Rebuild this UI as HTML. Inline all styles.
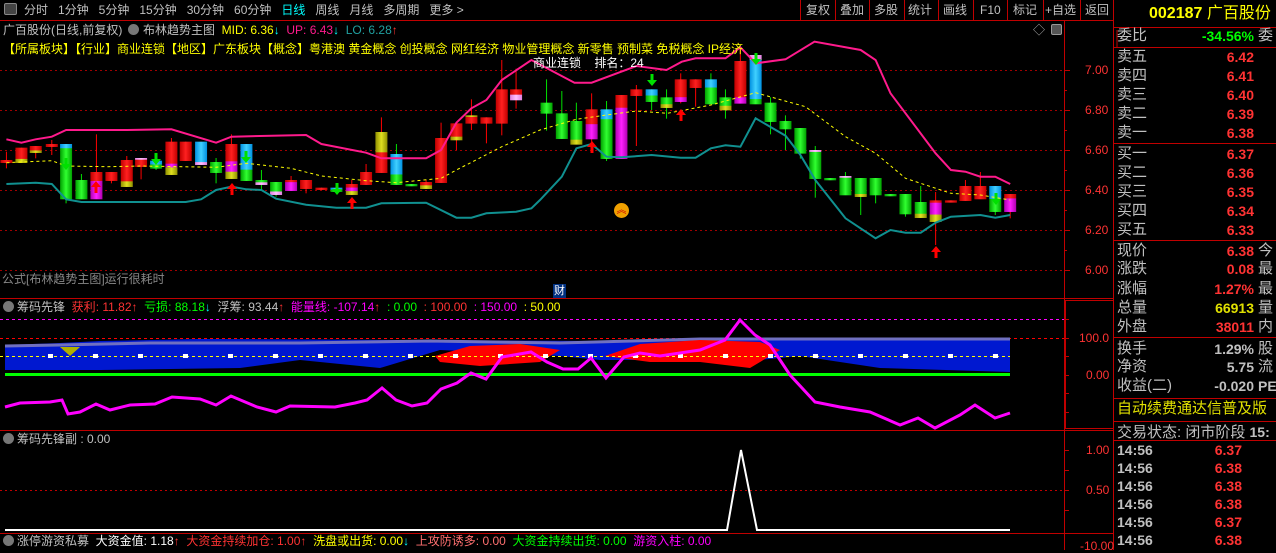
<!DOCTYPE html>
<html><head><meta charset="utf-8"><style>
body{margin:0;background:#000;width:1276px;height:550px;overflow:hidden;position:relative;font-family:"Liberation Sans","Noto Sans CJK SC",sans-serif;font-size:12px;color:#c0c0c0}
.t{position:absolute;white-space:pre;line-height:14px}
.r{color:#ff3333}.g{color:#00ff00}.y{color:#ffff00}.m{color:#ff00ff}.c{color:#00ffff}.w{color:#fff}
.lbl{position:absolute;left:1117px;font-size:15px;color:#c0c0c0;line-height:18px;white-space:pre}
.val{position:absolute;right:22px;font-size:14px;font-weight:bold;color:#ff3333;line-height:18px;text-align:right}
.x3{position:absolute;left:1258px;font-size:15px;color:#c0c0c0;line-height:18px}
svg{position:absolute;left:0;top:0}
</style></head><body>
<svg id="s" width="1276" height="550"></svg>

<!-- top menu -->
<div class="t" style="left:4px;top:3px;width:13px;height:12px;border:1px solid #888;border-radius:2px;box-sizing:border-box;background:#444"></div>
<div class="t" style="top:3px;left:24px;font-size:12px">分时   1分钟   5分钟   15分钟   30分钟   60分钟   <span class="c">日线</span>   周线   月线   多周期   更多 &gt;</div>
<div class="t" style="top:3px;left:806px">复权</div>
<div class="t" style="top:3px;left:840px">叠加</div>
<div class="t" style="top:3px;left:874px">多股</div>
<div class="t" style="top:3px;left:908px">统计</div>
<div class="t" style="top:3px;left:943px">画线</div>
<div class="t" style="top:3px;left:980px">F10</div>
<div class="t" style="top:3px;left:1013px">标记</div>
<div class="t" style="top:3px;left:1045px">+自选</div>
<div class="t" style="top:3px;left:1085px">返回</div>

<!-- line 2 -->
<div class="t" style="top:23px;left:3px">广百股份(日线,前复权)</div>
<div class="t" style="top:24px;left:128px;width:11px;height:11px;border-radius:6px;background:#777"></div>
<div class="t" style="top:23px;left:143px">布林趋势主图  <span class="y">MID: 6.36</span><span class="c">↓</span>  <span style="color:#ff1a8c">UP: 6.43</span><span class="c">↓</span>  <span style="color:#20a0a0">LO: 6.28</span><span class="r">↑</span></div>
<div class="t" style="top:23px;left:1033px;color:#aaa">◇</div>
<div class="t" style="top:24px;left:1051px;width:11px;height:11px;border:1px solid #999;border-radius:2px;box-sizing:border-box;background:#555"></div>
<div class="t y" style="top:42px;left:3px">【所属板块】【行业】商业连锁【地区】广东板块【概念】粤港澳 黄金概念 创投概念 网红经济 物业管理概念 新零售 预制菜 免税概念 IP经济</div>
<div class="t w" style="top:56px;left:533px">商业连锁    排名：24</div>
<div class="t" style="top:272px;left:2px;color:#888">公式[布林趋势主图]运行很耗时</div>
<div class="t w" style="top:284px;left:553px;background:#003080;font-size:11px;padding:0 1px">财</div>
<div class="t" style="top:203px;left:614px;width:15px;height:15px;border-radius:8px;background:#f0a000;color:#c00;font-size:10px;text-align:center;line-height:15px">︽</div>

<!-- axis labels main -->
<div class="t r" style="top:63px;left:1085px">7.00</div>
<div class="t r" style="top:103px;left:1085px">6.80</div>
<div class="t r" style="top:143px;left:1085px">6.60</div>
<div class="t r" style="top:183px;left:1085px">6.40</div>
<div class="t r" style="top:223px;left:1085px">6.20</div>
<div class="t r" style="top:263px;left:1085px">6.00</div>

<!-- indicator header -->
<div class="t" style="top:301px;left:3px;width:11px;height:11px;border-radius:6px;background:#777"></div>
<div class="t" style="top:300px;left:17px">筹码先锋  <span class="r">获利</span><span class="r">: 11.82↑</span>  <span class="g">亏损: 88.18</span><span class="c">↓</span>  浮筹: 93.44<span class="r">↑</span>  <span class="m">能量线: -107.14</span><span class="r">↑</span>  <span class="g">: 0.00</span>  <span class="r">: 100.00</span>  <span class="m">: 150.00</span>  <span class="y">: 50.00</span></div>
<div class="t r" style="top:331px;left:1079px">100.0</div>
<div class="t r" style="top:368px;left:1086px">0.00</div>

<div class="t" style="top:433px;left:3px;width:11px;height:11px;border-radius:6px;background:#777"></div>
<div class="t" style="top:432px;left:17px">筹码先锋副 : 0.00</div>
<div class="t r" style="top:443px;left:1086px">1.00</div>
<div class="t r" style="top:483px;left:1086px">0.50</div>
<div class="t r" style="top:539px;left:1080px">-10.00</div>

<div class="t" style="top:535px;left:3px;width:11px;height:11px;border-radius:6px;background:#777"></div>
<div class="t" style="top:534px;left:17px">涨停游资私募  <span class="w">大资金值: 1.18</span><span class="r">↑</span>  <span class="r">大资金持续加仓: 1.00↑</span>  <span class="y">洗盘或出货: 0.00</span><span class="c">↓</span>  <span style="color:#ff7070">上攻防诱多: 0.00</span>  <span class="g">大资金持续出货: 0.00</span>  <span class="m">游资入柱: 0.00</span></div>

<!-- right panel -->
<div class="t" style="top:4px;left:1149px;font-size:16px;font-weight:bold;color:#ffff00;line-height:20px">002187 <span style="font-weight:normal">广百股份</span></div>
<div class="lbl" style="top:27px">委比</div><div class="val" style="top:27px;color:#00ff00">-34.56%</div><div class="x3" style="top:27px">委</div>
<div class="lbl" style="top:48px">卖五</div><div class="val" style="top:48px">6.42</div>
<div class="lbl" style="top:67px">卖四</div><div class="val" style="top:67px">6.41</div>
<div class="lbl" style="top:86px">卖三</div><div class="val" style="top:86px">6.40</div>
<div class="lbl" style="top:105px">卖二</div><div class="val" style="top:105px">6.39</div>
<div class="lbl" style="top:124px">卖一</div><div class="val" style="top:124px">6.38</div>
<div class="lbl" style="top:145px">买一</div><div class="val" style="top:145px">6.37</div>
<div class="lbl" style="top:164px">买二</div><div class="val" style="top:164px">6.36</div>
<div class="lbl" style="top:183px">买三</div><div class="val" style="top:183px">6.35</div>
<div class="lbl" style="top:202px">买四</div><div class="val" style="top:202px">6.34</div>
<div class="lbl" style="top:221px">买五</div><div class="val" style="top:221px">6.33</div>
<div class="lbl" style="top:242px">现价</div><div class="val" style="top:242px">6.38</div><div class="x3" style="top:242px">今</div>
<div class="lbl" style="top:260px">涨跌</div><div class="val" style="top:260px">0.08</div><div class="x3" style="top:260px">最</div>
<div class="lbl" style="top:280px">涨幅</div><div class="val" style="top:280px">1.27%</div><div class="x3" style="top:280px">最</div>
<div class="lbl" style="top:299px">总量</div><div class="val" style="top:299px;color:#e0e000">66913</div><div class="x3" style="top:299px">量</div>
<div class="lbl" style="top:318px">外盘</div><div class="val" style="top:318px">38011</div><div class="x3" style="top:318px">内</div>
<div class="lbl" style="top:340px">换手</div><div class="val" style="top:340px;color:#c0c0c0">1.29%</div><div class="x3" style="top:340px">股</div>
<div class="lbl" style="top:358px">净资</div><div class="val" style="top:358px;color:#c0c0c0">5.75</div><div class="x3" style="top:358px">流</div>
<div class="lbl" style="top:377px">收益(二)</div><div class="val" style="top:377px;color:#c0c0c0">-0.020</div><div class="x3" style="top:377px;font-weight:bold;font-size:14px">PE</div>
<div class="lbl" style="top:400px;color:#e0e000;font-size:15px">自动续费通达信普及版</div>
<div class="lbl" style="top:423px">交易状态: 闭市阶段 <b style="font-size:14px">15:</b></div>
<div class="lbl" style="top:441px;font-weight:bold;font-size:14px">14:56</div><div class="val" style="top:441px;right:34px">6.37</div>
<div class="lbl" style="top:459px;font-weight:bold;font-size:14px">14:56</div><div class="val" style="top:459px;right:34px">6.38</div>
<div class="lbl" style="top:477px;font-weight:bold;font-size:14px">14:56</div><div class="val" style="top:477px;right:34px">6.38</div>
<div class="lbl" style="top:495px;font-weight:bold;font-size:14px">14:56</div><div class="val" style="top:495px;right:34px">6.38</div>
<div class="lbl" style="top:513px;font-weight:bold;font-size:14px">14:56</div><div class="val" style="top:513px;right:34px">6.37</div>
<div class="lbl" style="top:531px;font-weight:bold;font-size:14px">14:56</div><div class="val" style="top:531px;right:34px">6.38</div>

<script>
var S=document.getElementById('s'),h='';
function L(x1,y1,x2,y2,c,w,d){h+='<line x1="'+x1+'" y1="'+y1+'" x2="'+x2+'" y2="'+y2+'" stroke="'+c+'" stroke-width="'+(w||1)+'"'+(d?' stroke-dasharray="'+d+'"':'')+'/>';}
function P(pts,c,w,d){h+='<polyline fill="none" points="'+pts.map(function(p){return p[0].toFixed(1)+','+p[1].toFixed(1)}).join(' ')+'" stroke="'+c+'" stroke-width="'+(w||1)+'"'+(d?' stroke-dasharray="'+d+'"':'')+'/>';}
function R(x,y,w,hh,c){h+='<rect x="'+x+'" y="'+y+'" width="'+w+'" height="'+hh+'" fill="'+c+'"/>';}
var RED='#a00000';
// gradients
var G={r:['#c00000','#ff2020'],g:['#00a000','#30ff30'],b:['#0090e0','#40d0ff'],m:['#b000b0','#ff20ff'],y:['#909000','#e0e020'],p:['#e080e0','#ffc0ff']};
h+='<defs>';for(var k in G)h+='<linearGradient id="G'+k+'"><stop offset="0" stop-color="'+G[k][0]+'"/><stop offset=".5" stop-color="'+G[k][1]+'"/><stop offset="1" stop-color="'+G[k][0]+'"/></linearGradient>';h+='</defs>';
// frame lines
L(0,20.5,1113,20.5,'#c00000');L(1113,27.5,1276,27.5,'#c00000');
[800,835,869,904,938,973,1007,1043,1080].forEach(function(x){L(x+.5,0,x+.5,20,'#c00000')});
L(1113.5,0,1113.5,550,'#c00000');L(1064.5,20,1064.5,550,'#c00000');
L(0,298.5,1113,298.5,'#c00000');L(0,430.5,1113,430.5,'#c00000');L(0,533.5,1113,533.5,'#c00000');
h+='<rect x="1065.5" y="300.5" width="48" height="128" fill="none" stroke="#c00000"/>';
[47,143,240,337,398,421,440].forEach(function(y){L(1113,y+.5,1276,y+.5,'#c00000')});
L(1117,30,1117,47,'#c00000');
// grid main
[70,110,150,190,230,270].forEach(function(y){L(0,y+.5,1064,y+.5,RED,1,'2,3');L(1064,y+.5,1070,y+.5,'#c00000');});
[90,130,170,210,250].forEach(function(y){L(1064,y+.5,1067,y+.5,'#c00000')});
// candles
var A=[[18,360,368,335,385,'r'],[60,323,368,323,368,'r3y1'],[100,318,338,318,355,'r2y1'],[145,312,320,300,345,'r'],[185,312,477,312,490,'b1g12'],[228,420,477,402,477,'g'],[270,396,477,283,477,'r1m2'],[312,396,422,396,430,'r'],[355,360,440,348,440,'r4y1'],[395,354,380,354,418,'p1r4'],[437,362,385,362,390,'b1g1'],[480,305,404,294,404,'r6m1y2'],[520,305,362,305,362,'r'],[563,305,374,305,374,'b8p1'],[605,366,398,354,430,'g'],[648,312,416,283,416,'r5m3y2'],[690,312,422,312,422,'b7g3'],[732,420,434,390,452,'g1p1'],[773,426,464,426,470,'g3p1'],[815,420,452,408,452,'r1m4'],[857,420,446,420,460,'r'],[900,443,446,443,446,'r'],[942,443,455,443,460,'b1g1'],[985,432,464,420,464,'r1m1y1'],[1025,396,434,372,434,'r'],[1068,276,398,232,398,'y2r2'],[1110,342,434,312,434,'b2g1'],[1152,432,434,432,434,'g'],[1193,426,446,420,446,'r1y1'],[1235,294,428,248,428,'r'],[1278,250,300,250,330,'r4y1'],[1320,226,250,178,270,'y1r4'],[1362,232,250,232,310,'r'],[1405,148,250,60,286,'r'],[1445,148,180,86,206,'r1p1']];
var B=[[18,188,220,118,272,'g'],[60,220,296,153,296,'g'],[100,243,313,188,313,'g4y1'],[142,208,297,160,328,'r1m1'],[183,208,356,183,363,'b1g4'],[224,165,356,165,356,'r1m4'],[265,148,167,135,318,'r'],[307,148,185,148,210,'b1g1'],[348,172,203,148,236,'g2y1'],[387,118,185,100,190,'r4m1'],[428,118,143,118,200,'r'],[470,118,192,100,192,'b1g2'],[510,172,210,148,236,'g2y1'],[551,63,190,20,190,'r6m1'],[593,45,192,45,192,'p1b8g1'],[634,188,245,172,283,'g'],[675,243,267,226,330,'g'],[716,264,340,264,356,'g'],[757,330,416,318,473,'p1g14'],[798,414,416,414,416,'g'],[840,408,465,396,465,'p1g10'],[882,414,470,414,525,'g6y1'],[923,414,465,414,490,'g'],[964,462,464,462,464,'g'],[1005,462,522,462,530,'g'],[1047,486,533,438,533,'g3y1'],[1088,481,545,456,615,'r1m5y3'],[1130,481,483,481,483,'r'],[1170,438,482,420,482,'r'],[1211,438,477,396,477,'r'],[1252,438,515,438,525,'b1g1'],[1293,462,515,462,535,'r1m3']];
var C=[];A.forEach(function(a){C.push([a[0]/2.8,40+a[1]/3,40+a[2]/3,40+a[3]/3,40+a[4]/3,a[5]])});
B.forEach(function(a){C.push([540+a[0]/2.75,40+a[1]/3,40+a[2]/3,40+a[3]/3,40+a[4]/3,a[5]])});
C.forEach(function(c){
 var x=c[0],segs=c[5].match(/[a-z]\d*/g).map(function(s){return [s[0],+(s.slice(1)||1)]});
 var wc=segs[0][0];if(wc=='b'||wc=='p')wc=segs[segs.length-1][0];if(wc=='y'||wc=='m')wc='r';
 var col={r:'#ff0000',g:'#00e000',b:'#00ff00',m:'#ff00ff',y:'#ff0000',p:'#ff0000'}[wc];
 L(x,c[3],x,c[4],col,1);
 var tot=0;segs.forEach(function(s){tot+=s[1]});var hh=Math.max(c[2]-c[1],2),y=c[1];
 segs.forEach(function(s){var sh=hh*s[1]/tot;R(x-6,y,12,sh+0.3,'url(#G'+s[0]+')');y+=sh;});
});
function cv(arr,k){return arr.map(function(p){return [k?540+p[0]/2.75:p[0]/2.8,40+p[1]/3]})}
var up=cv([[18,298],[60,308],[100,298],[145,290],[185,270],[355,270],[480,268],[605,308],[648,290],[857,285],[900,312],[1025,338],[1068,355],[1193,355],[1235,330],[1278,248],[1320,205],[1362,180],[1405,120],[1488,60]]).concat(cv([[0,50],[95,128],[142,128],[265,78],[348,90],[390,65],[428,55],[510,55],[551,22],[593,70],[675,58],[755,5],[882,30],[923,60],[964,160],[1088,340],[1130,390],[1170,395],[1211,410],[1252,410],[1293,432]],1).filter(function(p){return p[0]>545}));
P(up,'#ff1a8c',2);
var lo=cv([[18,432],[100,428],[145,432],[185,478],[228,486],[437,486],[520,486],[563,478],[605,450],[648,440],[690,448],[732,450],[773,476],[857,494],[942,503],[1025,503],[1068,490],[1193,488],[1278,533],[1320,533],[1362,520],[1445,515],[1488,505]]).concat(cv([[0,480],[60,410],[100,325],[142,312],[183,350],[224,352],[307,345],[387,353],[428,353],[470,325],[510,316],[551,320],[593,235],[675,287],[716,345],[757,420],[840,535],[923,595],[964,570],[1005,578],[1047,578],[1088,548],[1130,530],[1211,525],[1252,533],[1293,525]],1));
P(lo,'#109090',2);
var mid=cv([[18,368],[145,362],[185,378],[300,380],[395,378],[605,382],[690,370],[815,385],[900,408],[1025,422],[1110,428],[1235,415],[1278,390],[1405,320]]).concat(cv([[0,270],[100,238],[183,225],[265,213],[350,220],[470,195],[593,158],[730,200],[840,290],[923,340],[1005,415],[1130,460],[1211,465],[1293,480]],1));
P(mid,'#ffff00',1,'3,3');
// arrows
function ua(x,y){h+='<polygon points="'+x+','+y+' '+(x-5)+','+(y+6)+' '+(x-1.5)+','+(y+6)+' '+(x-1.5)+','+(y+12)+' '+(x+1.5)+','+(y+12)+' '+(x+1.5)+','+(y+6)+' '+(x+5)+','+(y+6)+'" fill="#ff0000"/>';}
function da(x,y){h+='<polygon points="'+x+','+y+' '+(x-5)+','+(y-6)+' '+(x-1.5)+','+(y-6)+' '+(x-1.5)+','+(y-12)+' '+(x+1.5)+','+(y-12)+' '+(x+1.5)+','+(y-6)+' '+(x+5)+','+(y-6)+'" fill="#00e000"/>';}
[[96,181],[232,183],[352,197],[592,141],[681,109],[936,246],[1.2,0]].forEach(function(a){if(a[0]>2)ua(a[0],a[1])});
[[66,170],[156,165],[246,163],[337,195],[652,86],[756,65],[996,205],[8,0]].forEach(function(a){if(a[0]>9)da(a[0],a[1])});
// indicator panel
L(0,319.5,1064,319.5,'#ff00ff',1,'3,3');L(0,338.5,1064,338.5,'#ff0000',1,'3,3');
h+='<polygon points="5,345 60,343 100,341 200,339 400,340 600,341 800,340 1010,338 1010,372 880,368 800,356 760,360 600,360 560,356 440,350 380,368 300,360 240,368 100,370 5,370" fill="#0018d0"/>';
P([[5,346],[60,345],[150,343],[300,343],[430,341],[560,343],[700,339],[1010,339]],'#7070c0',3);
h+='<polygon points="435,356 470,346 520,344 560,350 540,362 480,366 440,362" fill="#ff0000"/>';
h+='<polygon points="605,356 640,344 700,340 760,342 780,350 750,368 700,362 650,362" fill="#ff0000"/>';
h+='<polygon points="60,347 70,356 80,347" fill="#b0b000"/>';
L(0,356.5,1010,356.5,'#ffff00',1,'3,3');
for(var i=50;i<1010;i+=45)R(i-2,354,5,4,'#fff');
L(5,374.5,1010,374.5,'#00ff00',3);
P([[5,407],[20,403],[50,402],[50,402],[62,400],[68,414],[80,412],[96,404],[110,410],[130,405],[155,404],[172,397],[200,399],[216,405],[231,396],[257,407],[276,412],[290,406],[335,407],[355,403],[367,400],[382,388],[396,400],[412,406],[427,403],[441,389],[457,383],[471,373],[486,379],[502,357],[531,352],[547,362],[563,369],[578,369],[591,358],[606,378],[624,357],[640,353],[660,356],[700,350],[725,340],[740,320],[755,335],[770,345],[790,375],[815,402],[840,407],[870,412],[900,425],[918,418],[935,428],[960,415],[975,405],[995,418],[1010,413]],'#ff00ff',3);
[319,338,356,375,393,412].forEach(function(y){L(1064,y+.5,1069,y+.5,'#c00000')});
// sub panel
L(0,490.5,1064,490.5,'#c00000',1,'2,3');
P([[5,530],[727,530],[741,450],[757,530],[1010,530]],'#fff',2);
[450,470,490,510].forEach(function(y){L(1064,y+.5,1069,y+.5,'#c00000')});
S.innerHTML=h;
</script>
</body></html>
